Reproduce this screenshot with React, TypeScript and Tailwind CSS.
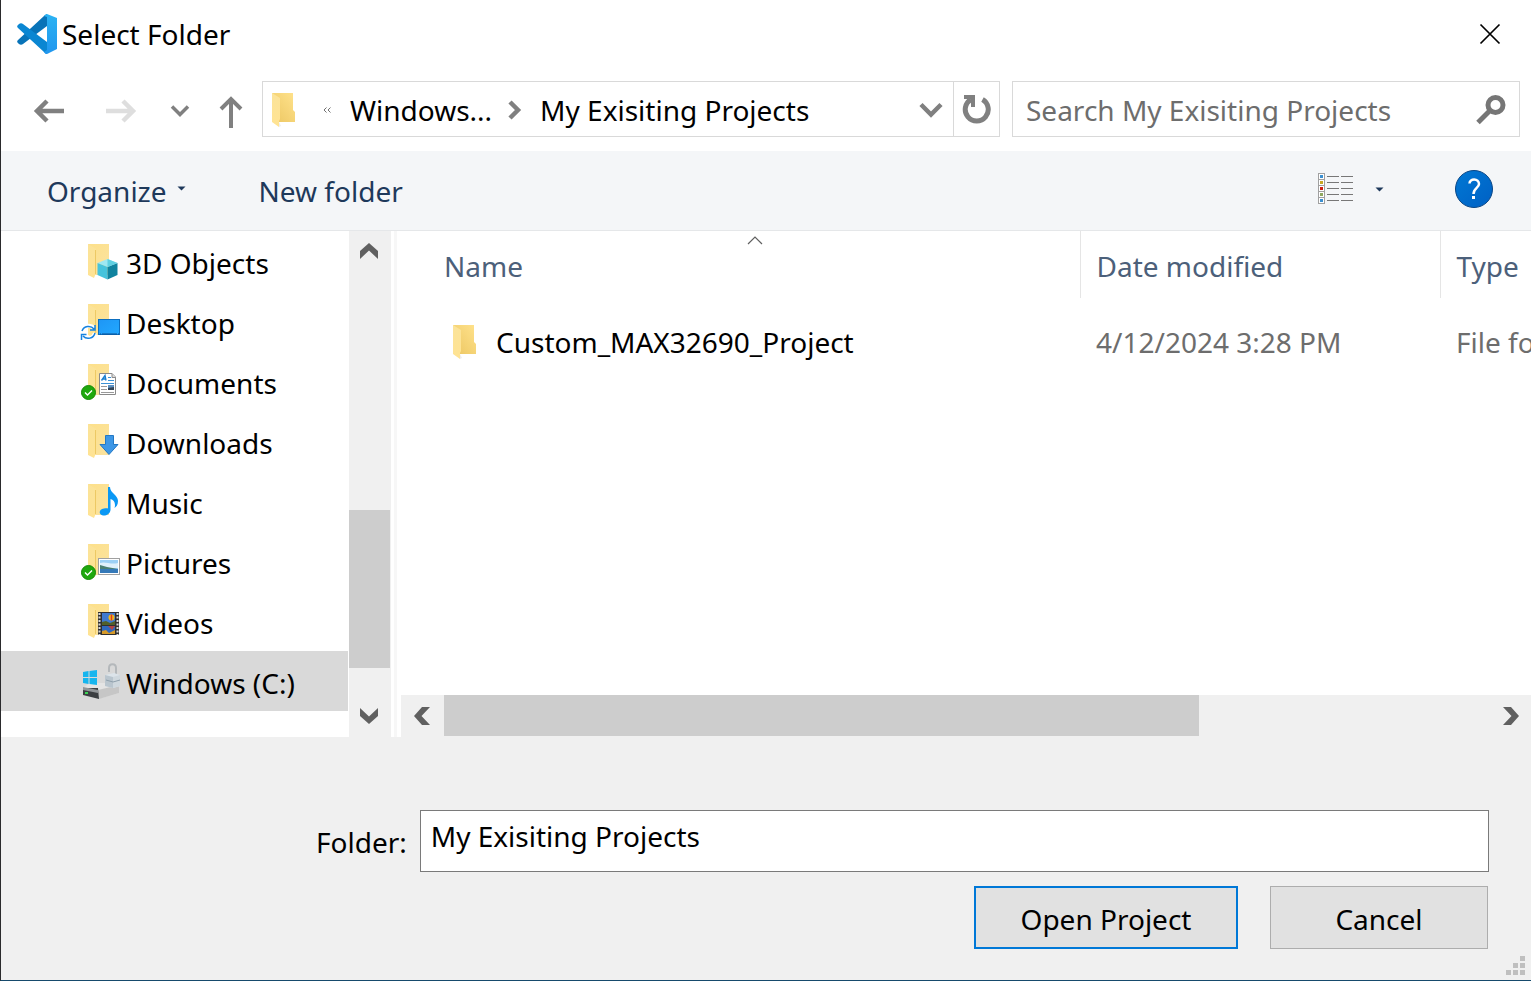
import type { ReactNode } from "react";

function FolderShape() {
  return (
    <>
      <path d="M8 1H29V27L31 29V32H14Z" fill="url(#folderBack)" />
      <path d="M8 1L16 7V32L14 35L8 32Z" fill="url(#folderFlap)" />
    </>
  );
}

function Gradients() {
  return (
    <svg width="0" height="0" className="absolute" aria-hidden="true">
      <defs>
        <linearGradient id="folderBack" x1="0" y1="1" x2="1" y2="0">
          <stop offset="0" stopColor="#ecc661" />
          <stop offset="1" stopColor="#ffe28c" />
        </linearGradient>
        <linearGradient id="folderFlap" x1="0" y1="0" x2="0" y2="1">
          <stop offset="0" stopColor="#fbe399" />
          <stop offset="1" stopColor="#ffe393" />
        </linearGradient>
        <linearGradient id="placeBack" x1="0" y1="0" x2="1" y2="1">
          <stop offset="0" stopColor="#fde08a" />
          <stop offset="1" stopColor="#fbe3a0" />
        </linearGradient>
        <linearGradient id="screen" x1="0" y1="0" x2="1" y2="1">
          <stop offset="0" stopColor="#1e96f5" />
          <stop offset="1" stopColor="#22a8ff" />
        </linearGradient>
        <linearGradient id="help" x1="0" y1="0" x2="1" y2="1">
          <stop offset="0" stopColor="#0078d4" />
          <stop offset="1" stopColor="#0060c4" />
        </linearGradient>
        <linearGradient id="codeRight" x1="0" y1="0" x2="0" y2="1">
          <stop offset="0" stopColor="#2bb3f3" />
          <stop offset="1" stopColor="#2196ee" />
        </linearGradient>
      </defs>
    </svg>
  );
}

/* Plain folder with a taller open flap and a tab at the lower right. */
function OpenFolder() {
  return (
    <svg width="26" height="36" viewBox="0 0 26 36" className="shrink-0" aria-hidden="true">
      <path d="M1 1H22V18L24 20V30H8Z" fill="url(#folderBack)" />
      <path d="M1 1L9 6V27L8 29V35L1 30Z" fill="url(#folderFlap)" />
      <path d="M8 30V35L10 34" fill="#eee" />
    </svg>
  );
}

function SyncedBadge() {
  return (
    <>
      <circle cx="8.5" cy="29.5" r="7" fill="#1fa80e" stroke="#158a08" />
      <path d="M5 29.5L7.5 32L12 27.5" fill="none" stroke="#fff" strokeWidth="1.4" />
    </>
  );
}

function CubeBadge() {
  return (
    <>
      <path d="M27.500 16L37.500 20L27.500 24L17.500 20Z" fill="#9ee8f2" />
      <path d="M17.500 20L27.500 24V36.500L17.500 32Z" fill="#45c3dc" />
      <path d="M37.500 20L27.500 24V36.500L37.500 32Z" fill="#10839f" />
      <path d="M27.500 16L37.500 20L27.500 24Z" fill="#5fd0e2" />
    </>
  );
}

function DesktopBadge() {
  return (
    <>
      <rect x="18.5" y="16.5" width="21" height="15" fill="url(#screen)" stroke="#0d6fc0" />
      <path d="M20 31H39" stroke="#0a4f90" strokeDasharray="1 1 15 1" />
      <g fill="none" stroke="#fff" strokeWidth="4">
        <path d="M2 28A7 7 0 0 1 14 25M15 30A7 7 0 0 1 3 33" />
      </g>
      <g fill="none" stroke="#1683e0" strokeWidth="1.5">
        <path d="M2 28A7 7 0 0 1 14 26M15 22V27H10" />
        <path d="M15 30A7 7 0 0 1 3 33M1.500 37V31.500H6.500" />
      </g>
    </>
  );
}

function DocumentBadge() {
  return (
    <>
      <path d="M19.500 10.500H32L35.500 14V31.500H19.500Z" fill="#fff" stroke="#8a8a8a" />
      <path d="M32 10.500V14.500H35.500" fill="#ddd" stroke="#8a8a8a" />
      <path d="M21.500 17.500L25 12.500L26 17.500M23 16H26" fill="none" stroke="#1b7fd0" strokeWidth="1.4" />
      <path d="M28 14.500H31M28 17.500H34M21 20.500H34" stroke="#3c92d6" />
      <path d="M21 23.500H27M21 26.500H27M21 29.500H34" stroke="#999" />
      <rect x="28" y="22" width="6" height="5" fill="#5d8fc0" />
      <path d="M28 27V25L34 24V27Z" fill="#345" />
      <SyncedBadge />
    </>
  );
}

function DownloadBadge() {
  return <path d="M25.500 12.500H33.500V21.500H38L29 31.500L20 21.500H25.500Z" fill="#3d97e6" stroke="#2378c4" />;
}

function MusicBadge() {
  return (
    <path
      d="M28 4H30C30 10 38 12 38 18C38 22 36 24 34.500 25C36 20 34 17 30.500 16V27C30 31 26 33 23 32.500C18 31.500 19 26 24 25.500C26 25 27 25 28 25.500Z"
      fill="#0a98f5"
    />
  );
}

function PictureBadge() {
  return (
    <>
      <rect x="18.500" y="15.500" width="21" height="16" fill="#fff" stroke="#a0a0a0" />
      <rect x="20" y="17" width="18" height="13" fill="#9cd0f5" />
      <path d="M20 20C25 18 31 22 38 20V25H20Z" fill="#dff0fb" />
      <path d="M20 22L27 24L38 26V27H20Z" fill="#4a7f72" />
      <path d="M20 26H38V30H20Z" fill="#3579b8" />
      <SyncedBadge />
    </>
  );
}

function VideoBadge() {
  return (
    <>
      <rect x="18" y="9" width="21" height="23" fill="#303030" />
      <path d="M19.500 10V32M37.500 10V32" stroke="#d8d8d8" strokeWidth="2" strokeDasharray="2 1.500" />
      <rect x="22" y="10" width="13" height="12" fill="#3e7ad0" />
      <rect x="22" y="23" width="13" height="8" fill="#2f68bd" />
      <circle cx="31.500" cy="14.500" r="3" fill="#f2b91c" />
      <path d="M31.500 11.500V17.500" stroke="#dd3b25" strokeWidth="1.500" />
      <path d="M22 19L26 18L30 20L35 18V22H22Z" fill="#51602a" />
      <path d="M28 23H35L32 27Z" fill="#b44343" />
      <path d="M22 28L26 27L29 30L35 27V31H22Z" fill="#d69a28" />
    </>
  );
}

function PlaceIcon({ children }: { children: ReactNode }) {
  return (
    <svg width="41" height="40" viewBox="0 0 41 40" className="shrink-0" aria-hidden="true">
      <path d="M8 1H29V32H14Z" fill="url(#placeBack)" />
      <path d="M8 1L16 6V30L14 35L8 32Z" fill="url(#folderFlap)" />
      <path d="M15.500 7V31" stroke="#edc964" />
      {children}
    </svg>
  );
}

function DriveIcon() {
  return (
    <svg width="41" height="40" viewBox="0 0 41 40" className="shrink-0" aria-hidden="true">
      <path d="M3 25L10 20H30L39 22V30L22 35Z" fill="#e4e4e4" />
      <path d="M18 27L39 22V30L19 36Z" fill="#c6c6c6" />
      <path d="M3 25H18L19 36L3 32Z" fill="#3c3f42" />
      <path d="M3 24L18 27V30L3 27Z" fill="#929699" />
      <rect x="5" y="29" width="3" height="2" fill="#39d353" />
      <g fill="#16b5ee">
        <path d="M3 9L8.500 8V14H3Z" />
        <path d="M9.500 8L17 7V14H9.500Z" />
        <path d="M3 15H8.500V21L3 20Z" />
        <path d="M9.500 15H17V22L9.500 21Z" />
      </g>
      <path d="M29 9V5C29 0 36 0 36 5V12" fill="none" stroke="#b4b8bb" strokeWidth="2" />
      <path d="M25 12L34 10L40 12V23L33 25L25 23Z" fill="#dce4ea" />
      <path d="M25 12L33 14V25L25 23Z" fill="#b9c5ce" />
      <path d="M33 14L40 12V23L33 25Z" fill="#cfd8de" />
      <path d="M26 17L33 19L40 17" fill="none" stroke="#8fa0ac" />
    </svg>
  );
}

const places: { name: string; icon: ReactNode; selected?: boolean }[] = [
  { name: "3D Objects", icon: <PlaceIcon><CubeBadge /></PlaceIcon> },
  { name: "Desktop", icon: <PlaceIcon><DesktopBadge /></PlaceIcon> },
  { name: "Documents", icon: <PlaceIcon><DocumentBadge /></PlaceIcon> },
  { name: "Downloads", icon: <PlaceIcon><DownloadBadge /></PlaceIcon> },
  { name: "Music", icon: <PlaceIcon><MusicBadge /></PlaceIcon> },
  { name: "Pictures", icon: <PlaceIcon><PictureBadge /></PlaceIcon> },
  { name: "Videos", icon: <PlaceIcon><VideoBadge /></PlaceIcon> },
  { name: "Windows (C:)", icon: <DriveIcon />, selected: true },
];

function CodeLogo() {
  return (
    <svg width="42" height="42" viewBox="0 0 42 42" className="shrink-0" aria-hidden="true">
      <path d="M31 1V13L7 31C6 32 4 32 3 31L1.500 29.500C1 29 1 28 2 27L28 3C29 2 30 1 31 1Z" fill="#0873b8" />
      <path d="M31 41V29L7 11C6 10 4 10 3 11L1.500 12.500C1 13 1 14 2 15L28 39C29 40 30 41 31 41Z" fill="#0a86d2" />
      <path d="M31 1L41 5V36L31 41C29 41 29 40 28 39L31 37V4L28 3C29 2 30 1 31 1Z" fill="url(#codeRight)" />
    </svg>
  );
}

function TitleBar() {
  return (
    <header className="flex h-[67px] items-center justify-between pr-[30px] pl-[15px]">
      <div className="flex items-center gap-1">
        <CodeLogo />
        <h1 className="pt-px text-black">Select Folder</h1>
      </div>
      <button type="button" aria-label="Close">
        <svg width="22" height="22" viewBox="0 0 22 22" aria-hidden="true">
          <path d="M1.500 1.500L20.500 20.500M20.500 1.500L1.500 20.500" stroke="#000" strokeWidth="1.700" />
        </svg>
      </button>
    </header>
  );
}

function NavigationBar() {
  return (
    <nav className="flex items-center pt-[14px] pr-[11px] pb-[14px] pl-[31px]">
      <div className="flex w-[230px] shrink-0 items-center pt-1 text-[#808080]">
        <button type="button" aria-label="Back" className="mr-[38px]">
          <svg width="34" height="30" viewBox="0 0 34 30" fill="none" stroke="currentColor" strokeWidth="4.500" aria-hidden="true">
            <path d="M32 15H4M15 5L5 15L15 25" />
          </svg>
        </button>
        <button type="button" aria-label="Forward" className="mr-8 text-[#dedede]">
          <svg width="34" height="30" viewBox="0 0 34 30" fill="none" stroke="currentColor" strokeWidth="4.500" aria-hidden="true">
            <path d="M2 15H30M19 5L29 15L19 25" />
          </svg>
        </button>
        <button type="button" aria-label="Recent locations" className="mr-7">
          <svg width="20" height="14" viewBox="0 0 20 14" fill="none" stroke="currentColor" strokeWidth="3.500" aria-hidden="true">
            <path d="M2 2.500L10 10.500L18 2.500" />
          </svg>
        </button>
        <button type="button" aria-label="Up">
          <svg width="26" height="36" viewBox="0 0 26 36" fill="none" stroke="currentColor" strokeWidth="4" aria-hidden="true">
            <path d="M13 35V6M3 16L13 6L23 16" />
          </svg>
        </button>
      </div>

      <div className="flex h-14 min-w-0 flex-1 border border-[#d9d9d9] bg-white">
        <div className="flex min-w-0 flex-1 items-center pt-px pr-[10px] pl-2">
          <OpenFolder />
          <svg width="8" height="6" viewBox="0 0 8 6" fill="none" stroke="#707070" className="mr-[19px] ml-[26px] shrink-0" aria-hidden="true">
            <path d="M3.500 0.500L1 3L3.500 5.500M7.500 0.500L5 3L7.500 5.500" />
          </svg>
          <button type="button" className="text-black">Windows...</button>
          <svg width="14" height="20" viewBox="0 0 14 20" fill="none" stroke="#808080" strokeWidth="4.500" className="mr-[18px] ml-4 shrink-0" aria-hidden="true">
            <path d="M2 2L10 10L2 18" />
          </svg>
          <button type="button" className="whitespace-nowrap text-black">My Exisiting Projects</button>
          <button type="button" aria-label="Previous locations" className="ml-auto text-[#808080]">
            <svg width="24" height="18" viewBox="0 0 24 18" fill="none" stroke="currentColor" strokeWidth="4.500" aria-hidden="true">
              <path d="M2 3.500L12 13.500L22 3.500" />
            </svg>
          </button>
        </div>
        <button type="button" aria-label="Refresh" className="flex w-[46px] items-center justify-center border-l border-[#d9d9d9] text-[#808080]">
          <svg width="30" height="30" viewBox="0 0 30 30" fill="none" stroke="currentColor" aria-hidden="true">
            <path d="M20.500 5.500A11.500 11.500 0 1 1 9 5.500" strokeWidth="5" />
            <path d="M2 3H11V13" strokeWidth="4" />
          </svg>
        </button>
      </div>

      <form role="search" className="ml-3 flex h-14 w-[508px] min-w-0 shrink items-center border border-[#d9d9d9] bg-white pt-px pr-3 pl-[13px]">
        <input
          type="search"
          aria-label="Search My Exisiting Projects"
          placeholder="Search My Exisiting Projects"
          className="min-w-0 flex-1 bg-transparent outline-none placeholder:text-[#6d6d6d]"
        />
        <button type="submit" aria-label="Search" className="text-[#767676]">
          <svg width="32" height="32" viewBox="0 0 32 32" fill="none" stroke="currentColor" strokeWidth="5" aria-hidden="true">
            <circle cx="20.500" cy="11" r="7.500" />
            <path d="M15 16.500L3 28.500" />
          </svg>
        </button>
      </form>
    </nav>
  );
}

const thumbColours = ["#3b8fd0", "#c8a822", "#d02010", "#8fa860", "#3b8fd0"];

function Toolbar() {
  return (
    <div className="flex h-20 items-center border-b border-[#e5e7e9] bg-[#f4f6f8] pr-[37px] pb-[3px] pl-[46px] text-[#1e395b]">
      <button type="button" className="flex items-center gap-[10px] pt-[3px]">
        Organize
        <svg width="9" height="5" viewBox="0 0 9 5" className="-mt-1" aria-hidden="true">
          <path d="M0.500 0.500H8.500L4.500 4.500Z" fill="#1e395b" />
        </svg>
      </button>
      <button type="button" className="ml-[73px] pt-[3px]">New folder</button>
      <button type="button" aria-label="Change your view" className="ml-auto">
        <svg width="36" height="32" viewBox="0 0 36 32" aria-hidden="true">
          {thumbColours.map((colour, row) => (
            <g key={row} transform={`translate(0 ${row * 6})`}>
              <rect x="0.500" y="0.500" width="6" height="6" fill="#fff" stroke="#a0a0a0" />
              <rect x="2" y="2" width="3" height="3" fill={colour} />
              <path d="M9 3.500H21M23 3.500H35" stroke="#777" />
            </g>
          ))}
        </svg>
      </button>
      <button type="button" aria-label="More view options" className="ml-[21px]">
        <svg width="9" height="5" viewBox="0 0 9 5" aria-hidden="true">
          <path d="M0.500 0.500H8.500L4.500 4.500Z" fill="#1e395b" />
        </svg>
      </button>
      <button type="button" aria-label="Help" className="ml-[70px]">
        <svg width="40" height="40" viewBox="0 0 40 40" aria-hidden="true">
          <circle cx="20" cy="20" r="18.500" fill="url(#help)" stroke="#0a4685" />
          <path d="M15.500 14.500C15.500 9 25 9 25 15C25 19 19.500 19 19.500 25" fill="none" stroke="#fff" strokeWidth="2.500" />
          <rect x="18" y="27" width="3" height="3" fill="#fff" />
        </svg>
      </button>
    </div>
  );
}

function ScrollArrow({ label, path, vertical }: { label: string; path: string; vertical?: boolean }) {
  return (
    <button type="button" aria-label={label} className={vertical ? "flex h-[42px] w-10 shrink-0 items-center justify-center" : "flex w-[41px] shrink-0 items-center justify-center"}>
      <svg width="20" height="20" viewBox="0 0 20 20" fill="#606060" aria-hidden="true">
        <path d={path} />
      </svg>
    </button>
  );
}

function Sidebar() {
  return (
    <aside className="flex w-[390px] shrink-0 bg-white">
      <ul className="min-w-0 flex-1">
        {places.map((place) => (
          <li key={place.name} className={place.selected ? "mr-px bg-[#d9d9d9]" : "mr-px"}>
            <button type="button" className="flex h-[60px] w-full items-center gap-[5px] pt-[3px] pl-[79px] text-left text-black">
              {place.icon}
              <span className="whitespace-nowrap">{place.name}</span>
            </button>
          </li>
        ))}
      </ul>
      <div className="flex w-[42px] flex-col bg-[#f0f0f0] pr-px">
        <ScrollArrow vertical label="Scroll up" path="M10 1L19 9V17L10 8.500L1 17V9Z" />
        <div className="grow-[237]" />
        <div className="grow-[158] bg-[#cdcdcd]" />
        <div className="grow-[27]" />
        <ScrollArrow vertical label="Scroll down" path="M10 18L19 10V2L10 10.500L1 2V10Z" />
      </div>
    </aside>
  );
}

function FileList() {
  return (
    <section className="ml-[3px] flex min-w-0 flex-1 flex-col border-l-[3px] border-[#f7f7f7] bg-white">
      <div className="relative flex-1 overflow-hidden">
        <table className="w-[1340px] table-fixed border-collapse text-left">
          <colgroup>
            <col className="w-[683px]" />
            <col className="w-[360px]" />
            <col />
          </colgroup>
          <thead>
            <tr className="h-[67px] text-[#4c607a]">
              <th scope="col" aria-sort="ascending" className="relative border-r border-[#e5e5e5] pt-[2px] pl-[47px] font-normal">
                Name
                <svg width="16" height="9" viewBox="0 0 16 9" className="absolute top-[5px] left-[350px]" fill="none" stroke="#606060" strokeWidth="1.200" aria-hidden="true">
                  <path d="M1 8L8 1L15 8" />
                </svg>
              </th>
              <th scope="col" className="border-r border-[#e5e5e5] pt-[2px] pl-4 font-normal">Date modified</th>
              <th scope="col" className="pt-[2px] pl-4 font-normal">Type</th>
            </tr>
          </thead>
          <tbody>
            <tr className="h-[87px] text-[#6d6d6d]">
              <td className="pl-[55px]">
                <button type="button" className="flex items-center gap-[18px] text-black">
                  <OpenFolder />
                  Custom_MAX32690_Project
                </button>
              </td>
              <td className="pl-4">4/12/2024 3:28 PM</td>
              <td className="pl-4">File folder</td>
            </tr>
          </tbody>
        </table>
      </div>
      <div className="ml-1 flex h-[42px] justify-between bg-[#f0f0f0] pb-px">
        <ScrollArrow label="Scroll left" path="M2 10L10 1H18L9.500 10L18 19H10Z" />
        <div className="ml-[2px] grow-[755] bg-[#cdcdcd]" />
        <div className="mr-[2px] grow-[289]" />
        <ScrollArrow label="Scroll right" path="M18 10L10 1H2L10.500 10L2 19H10Z" />
      </div>
    </section>
  );
}

function Footer() {
  return (
    <footer className="relative bg-[#f0f0f0] pt-[73px] pr-[42px] pb-[31px] pl-[315px] text-black">
      <div className="flex items-center gap-[13px]">
        <label htmlFor="folder-name" className="shrink-0 pt-[2px]">Folder:</label>
        <input
          id="folder-name"
          type="text"
          defaultValue="My Exisiting Projects"
          className="h-[62px] min-w-0 flex-1 border border-[#7a7a7a] bg-white px-[10px] pb-[10px] outline-none"
        />
      </div>
      <div className="mt-[14px] flex justify-end gap-8 pr-px">
        <button type="button" className="h-[63px] w-[264px] border-2 border-[#0078d7] bg-[#e1e1e1] pt-[2px]">Open Project</button>
        <button type="button" className="h-[63px] w-[218px] border border-[#adadad] bg-[#e1e1e1] pt-[2px]">Cancel</button>
      </div>
      <svg width="19" height="19" viewBox="0 0 19 19" className="absolute right-[6px] bottom-[5px]" fill="#bfbfbf" aria-hidden="true">
        <path d="M14 0H19V5H14ZM7 7H12V12H7ZM14 7H19V12H14ZM0 14H5V19H0ZM7 14H12V19H7ZM14 14H19V19H14Z" />
      </svg>
    </footer>
  );
}

export default function App() {
  return (
    <main className="flex min-h-screen flex-col overflow-hidden border-b border-l border-b-[#164a6c] border-l-[#2a2a2c] bg-white font-['Segoe_UI','Noto_Sans','Open_Sans',sans-serif] text-[28px] leading-9">
      <Gradients />
      <TitleBar />
      <NavigationBar />
      <Toolbar />
      <div className="flex flex-1">
        <Sidebar />
        <FileList />
      </div>
      <Footer />
    </main>
  );
}
